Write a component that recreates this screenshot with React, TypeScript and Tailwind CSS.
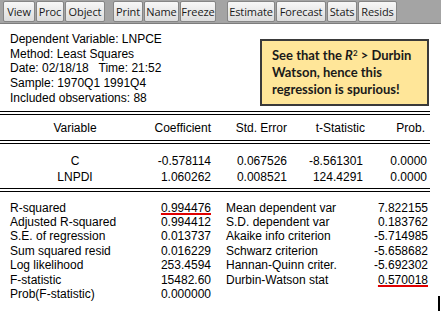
import React from "react";

const tools = [
  [
    { label: "View", w: "w-[32px]" },
    { label: "Proc", w: "w-[28px]" },
    { label: "Object", w: "w-[40px]" },
  ],
  [
    { label: "Print", w: "w-[30px]" },
    { label: "Name", w: "w-[35px]" },
    { label: "Freeze", w: "w-[36px]" },
  ],
  [
    { label: "Estimate", w: "w-[48px]" },
    { label: "Forecast", w: "w-[50px]" },
    { label: "Stats", w: "w-[30px]" },
    { label: "Resids", w: "w-[39px]" },
  ],
];

const header = [
  "Dependent Variable: LNPCE",
  "Method: Least Squares",
  "Date: 02/18/18   Time: 21:52",
  "Sample: 1970Q1 1991Q4",
  "Included observations: 88",
];

const coefs = [
  ["C", "-0.578114", "0.067526", "-8.561301", "0.0000"],
  ["LNPDI", "1.060262", "0.008521", "124.4291", "0.0000"],
];

const stats: [string, string, string, string][] = [
  ["R-squared", "0.994476", "Mean dependent var", "7.822155"],
  ["Adjusted R-squared", "0.994412", "S.D. dependent var", "0.183762"],
  ["S.E. of regression", "0.013737", "Akaike info criterion", "-5.714985"],
  ["Sum squared resid", "0.016229", "Schwarz criterion", "-5.658682"],
  ["Log likelihood", "253.4594", "Hannan-Quinn criter.", "-5.692302"],
  ["F-statistic", "15482.60", "Durbin-Watson stat", "0.570018"],
  ["Prob(F-statistic)", "0.000000", "", ""],
];

const DoubleRule = () => <div className="h-[4px] w-[430px] border-y border-black" />;

// red hand-drawn underline marking the two numbers being compared
const Underlined = ({ text }: { text: string }) => (
  <span className="underline decoration-[#e00000] decoration-2 underline-offset-[1px]">{text}</span>
);

export default function App() {
  return (
    <div className="relative h-[311px] w-[441px] overflow-hidden bg-white font-['Liberation_Sans',Arial,sans-serif] text-[12px] text-black">
      {/* toolbar */}
      <div className="flex h-[24px] items-start border-b border-[#7d7d7d] bg-[#a4a4a4] pl-[3px] pt-[1px]">
        {tools.map((group, gi) => (
          <div key={gi} className={`flex gap-[1px] ${gi === 1 ? "ml-[8px]" : ""} ${gi === 2 ? "ml-[11px]" : ""}`}>
            {group.map((t) => (
              <div
                key={t.label}
                className={`${t.w} flex h-[21px] items-center justify-center rounded-[2px] border border-[#858585] bg-gradient-to-b from-[#f7f7f7] to-[#dcdcdc] font-['Open_Sans',sans-serif] text-[11px] leading-none tracking-[-0.1px] text-[#1a1a1a]`}
              >
                {t.label}
              </div>
            ))}
          </div>
        ))}
      </div>

      {/* equation header */}
      <div className="pl-[10px] pt-[8px] leading-[14.7px]">
        {header.map((h) => (
          <div key={h} className="whitespace-pre">{h}</div>
        ))}
      </div>

      <div className="mt-[5px]">
        <DoubleRule />
      </div>

      {/* coefficient table */}
      <div className="grid h-[25px] grid-cols-[150px_61px_76px_78px_60px] items-center pt-[1px]">
        <div className="text-center">Variable</div>
        <div className="text-right">Coefficient</div>
        <div className="text-right">Std. Error</div>
        <div className="text-right">t-Statistic</div>
        <div className="text-right">Prob.</div>
      </div>
      <DoubleRule />
      <div className="pt-[9px] pb-[3px] leading-[16px]">
        {coefs.map((r) => (
          <div key={r[0]} className="grid grid-cols-[150px_61px_76px_76px_64px]">
            <div className="text-center">{r[0]}</div>
            <div className="text-right">{r[1]}</div>
            <div className="text-right">{r[2]}</div>
            <div className="text-right">{r[3]}</div>
            <div className="text-right">{r[4]}</div>
          </div>
        ))}
      </div>
      <DoubleRule />

      {/* summary stats */}
      <div className="pt-[9px] pb-[12px] leading-[14.4px]">
        {stats.map((s) => (
          <div key={s[0]} className="grid grid-cols-[10px_120px_81px_15px_202px]">
            <div />
            <div>{s[0]}</div>
            <div className="text-right">{s[0] === "R-squared" ? <Underlined text={s[1]} /> : s[1]}</div>
            <div />
            <div className="flex justify-between">
              <span>{s[2]}</span>
              <span>{s[2] === "Durbin-Watson stat" ? <Underlined text={s[3]} /> : s[3]}</span>
            </div>
          </div>
        ))}
      </div>
      <DoubleRule />

      {/* window edge */}
      <div className="absolute bottom-0 right-[1px] h-[15px] w-[2px] bg-black" />

      {/* annotation callout */}
      <div className="absolute left-[260px] top-[39px] h-[67px] w-[169px] border-2 border-[#3a3a3a] bg-[#ffe699] pl-[10px] pt-[6px] font-['Lato',sans-serif] text-[13px] font-bold leading-[17px] text-[#1a1a1a]">
        <div>
          See that the <i>R</i>
          <sup className="text-[8px]">2</sup> &gt; Durbin
        </div>
        <div>Watson, hence this</div>
        <div>regression is spurious!</div>
      </div>
    </div>
  );
}
